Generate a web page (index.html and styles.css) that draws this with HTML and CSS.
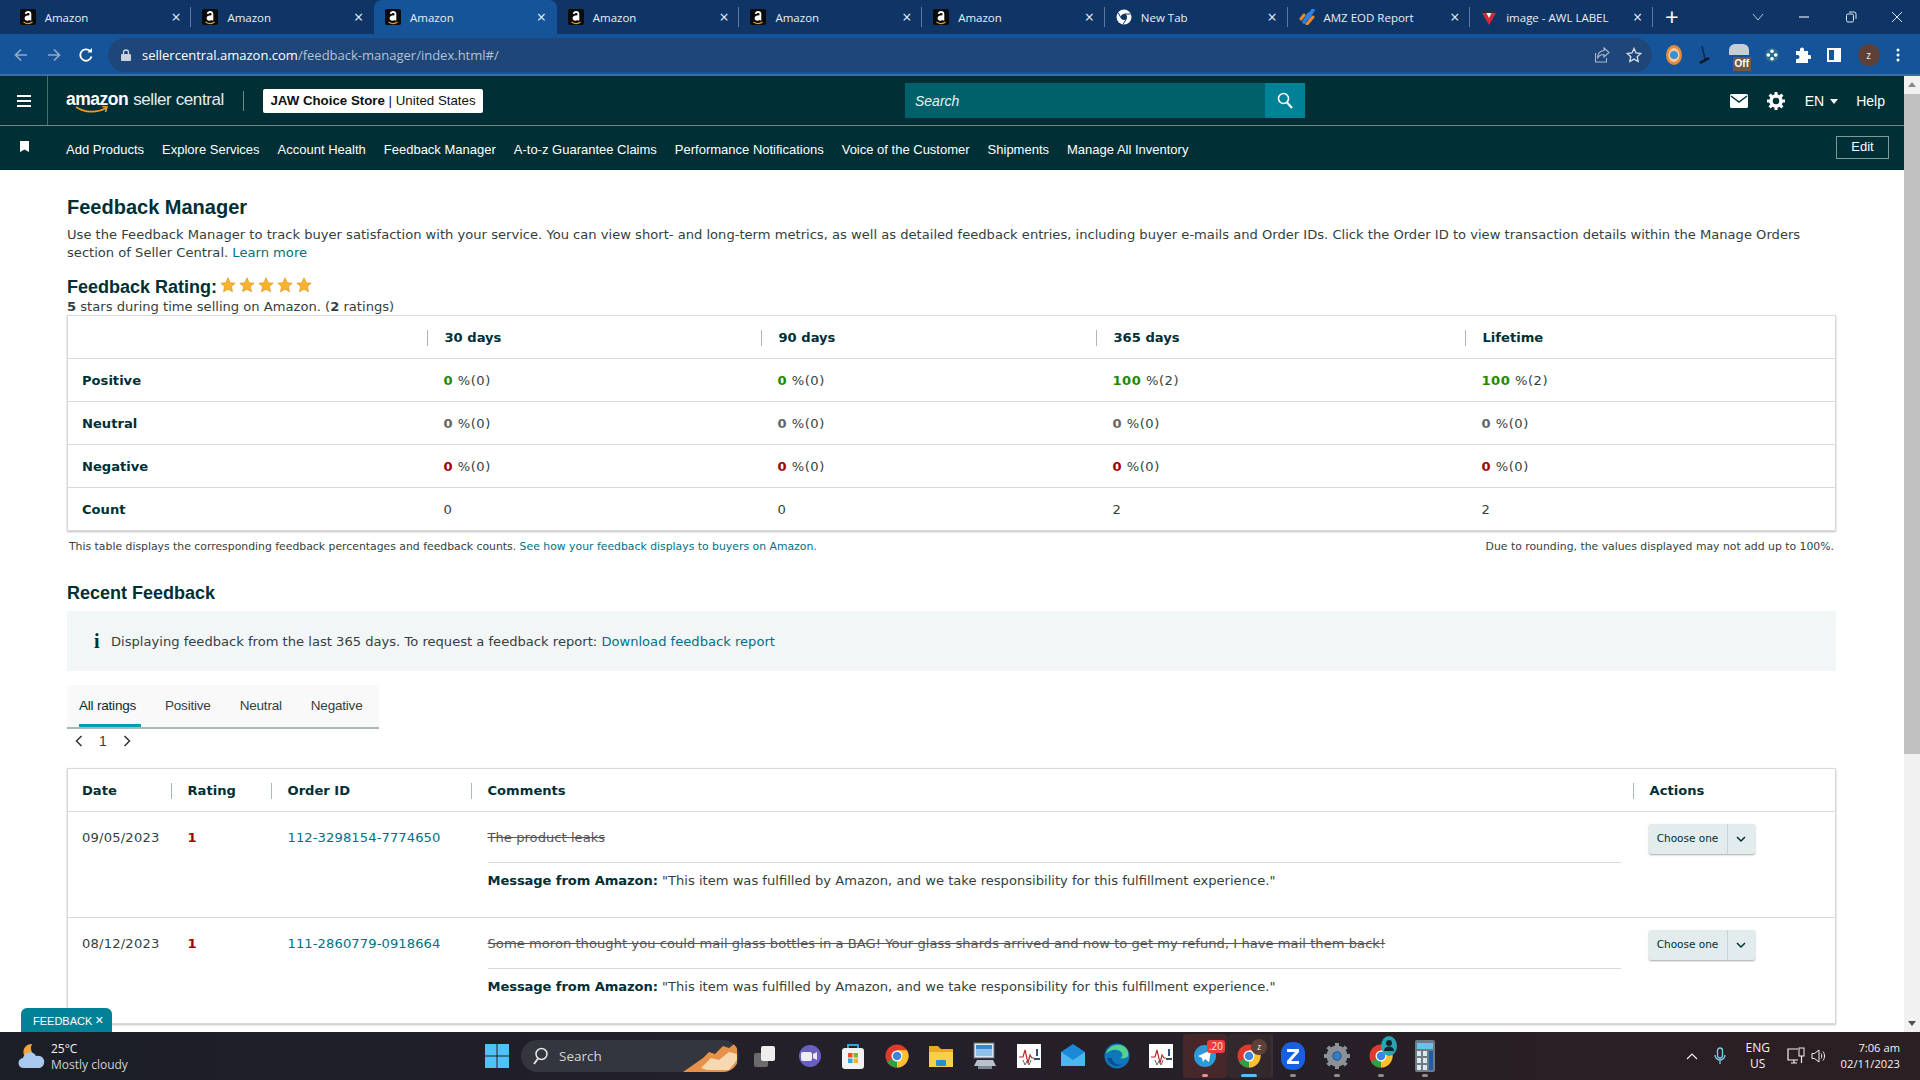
FILE: index.html
```html
<!DOCTYPE html>
<html lang="en">

<head>
	<meta charset="UTF-8" />
	<meta name="viewport" content="width=device-width, initial-scale=1.0" />
	<title>Feedback Manager</title>
	<link rel="stylesheet" href="styles.css">
</head>

<body>
	<svg class="defs" width="0" height="0">
		<symbol id="chrome" viewBox="0 0 48 48">
			<circle cx="24" cy="24" r="23" fill="#dd3b2e" />
			<path d="M24 24 4 35.5A23 23 0 0 0 24 47l11-12z" fill="#2f9e44" />
			<path d="M24 24 24 47A23 23 0 0 0 44 12.500L24 12z" fill="#fbc02d" />
			<circle cx="24" cy="24" r="11" fill="#fff" />
			<circle cx="24" cy="24" r="8.500" fill="#3d85e0" />
		</symbol>
		<symbol id="wave" viewBox="0 0 24 24">
			<rect width="24" height="24" fill="#fff" />
			<path d="M2 13h4l2-7 3 13 2-8 2 3h2" fill="none" stroke="#c0272d" stroke-width="1.200" />
			<path d="M19 5h2v7h-2zM17 14h6v2h-6z" fill="#31507a" />
			<path d="M6 16l2 5 2-4 2 4 2-5" fill="none" stroke="#666" stroke-width="1" />
		</symbol>
		<symbol id="amz" viewBox="0 0 16 16">
			<rect width="16" height="16" rx="2" fill="#0b0b0b" />
			<path d="M3.500 13c3 2 6.500 2 9 0" fill="none" stroke="#f39a21" stroke-width="1.300" />
			<path d="M4.800 4.800C5.100 3 6.300 2 8 2c2.200 0 3.300 1.100 3.300 2.900V11.500H9.600v-.8C9 11.400 8.200 11.700 7.300 11.700 5.700 11.700 4.600 10.700 4.600 9.200c0-2 1.700-2.800 4.900-3v-.9c0-.8-.5-1.300-1.500-1.300-.7 0-1.200.3-1.400 1z" fill="#fff" />
		</symbol>
	</svg>

	<div class="tabstrip">
		<div class="tab"><svg class="fav"><use href="#amz" /></svg><span class="tab-title">Amazon</span><span class="tab-x">×</span></div>
		<div class="tab"><svg class="fav"><use href="#amz" /></svg><span class="tab-title">Amazon</span><span class="tab-x">×</span></div>
		<div class="tab tab-active"><svg class="fav"><use href="#amz" /></svg><span class="tab-title">Amazon</span><span class="tab-x">×</span></div>
		<div class="tab"><svg class="fav"><use href="#amz" /></svg><span class="tab-title">Amazon</span><span class="tab-x">×</span></div>
		<div class="tab"><svg class="fav"><use href="#amz" /></svg><span class="tab-title">Amazon</span><span class="tab-x">×</span></div>
		<div class="tab"><svg class="fav"><use href="#amz" /></svg><span class="tab-title">Amazon</span><span class="tab-x">×</span></div>
		<div class="tab">
			<svg class="fav" viewBox="0 0 16 16"><circle cx="8" cy="8" r="7.500" fill="#fff" /><circle cx="8" cy="8" r="3" fill="#0f3566" /><path d="M8 5h6.500M5.400 9.500 2.200 3.800M10.600 9.500 7 15.400" stroke="#0f3566" stroke-width="1" /></svg>
			<span class="tab-title">New Tab</span><span class="tab-x">×</span>
		</div>
		<div class="tab">
			<svg class="fav" viewBox="0 0 16 16"><path d="M9 9 14 1M5 13l5-8" stroke="#2f7fe8" stroke-width="3.500" stroke-linecap="round" /><path d="M2 10 5 6M8 15l6-7" stroke="#f08a24" stroke-width="3" stroke-linecap="round" /></svg>
			<span class="tab-title">AMZ EOD Report</span><span class="tab-x">×</span>
		</div>
		<div class="tab">
			<svg class="fav" viewBox="0 0 16 16"><path d="M1 1h14v3H1z" fill="#25304a" /><path d="M1 4h14L8 16z" fill="#d9263a" /><path d="M5.500 4h5L8 9z" fill="#fff" /></svg>
			<span class="tab-title">image - AWL LABEL</span><span class="tab-x">×</span>
		</div>
		<span class="new-tab">+</span>
		<div class="win-btns">
			<svg width="12" height="8" viewBox="0 0 12 8"><path d="M1 1l5 6 5-6" fill="none" stroke="#b7c6da" stroke-width="1" /></svg>
			<svg width="12" height="8" viewBox="0 0 12 8"><path d="M1 4h10" stroke="#dfe6ef" stroke-width="1.200" /></svg>
			<svg width="12" height="12" viewBox="0 0 12 12"><rect x="1.500" y="3" width="7" height="8" rx="1.500" fill="none" stroke="#dfe6ef" /><path d="M4 1h5a2 2 0 0 1 2 2v5" fill="none" stroke="#dfe6ef" /></svg>
			<svg width="12" height="12" viewBox="0 0 12 12"><path d="M1 1l10 10M11 1 1 11" stroke="#dfe6ef" stroke-width="1" /></svg>
		</div>
	</div>

	<div class="toolbar">
		<div class="nav-btns">
			<svg width="16" height="16" viewBox="0 0 16 16"><path d="M14 8H2.500M8 2.500 2.500 8 8 13.500" fill="none" stroke="#8fa9cb" stroke-width="1.700" /></svg>
			<svg width="16" height="16" viewBox="0 0 16 16"><path d="M2 8h11.500M8 2.500 13.500 8 8 13.500" fill="none" stroke="#8fa9cb" stroke-width="1.700" /></svg>
			<svg width="16" height="16" viewBox="0 0 16 16"><path d="M13.500 9.500A5.700 5.700 0 1 1 12 4" fill="none" stroke="#fff" stroke-width="1.800" /><path d="M9.500 5.500H14V1z" fill="#fff" /></svg>
		</div>
		<div class="omnibox">
			<svg class="lock" width="10" height="12" viewBox="0 0 10 12"><path d="M2.500 5V3.500a2.500 2.500 0 0 1 5 0V5" fill="none" stroke="#c9d3e0" stroke-width="1.300" /><rect y="5" width="10" height="7" rx="1" fill="#c9d3e0" /></svg>
			<span class="url"><span class="url-host">sellercentral.amazon.com</span>/feedback-manager/index.html#/</span>
			<svg class="omni-share" width="16" height="16" viewBox="0 0 16 16"><path d="M10 1l5 4.500L10 10V7.500C6.500 7.500 4.500 9 3.500 11.500 3.500 7 6 4 10 3.500z M1.500 6v9h11v-4" fill="none" stroke="#a9b9cf" stroke-width="1.100" /></svg>
			<svg width="16" height="16" viewBox="0 0 16 16"><path d="M8 1.500l2 4.500 4.800.5-3.600 3.200 1 4.800L8 12.100 3.800 14.500l1-4.800L1.200 6.500 6 6z" fill="none" stroke="#d5dde8" stroke-width="1.300" /></svg>
		</div>
		<div class="ext-icons">
			<svg width="16" height="20" viewBox="0 0 16 20"><ellipse cx="8" cy="10" rx="8" ry="10" fill="#e58a3c" /><ellipse cx="8" cy="10" rx="5.500" ry="7" fill="#f3c9a0" /><circle cx="8" cy="10" r="4" fill="#3a8fd0" /></svg>
			<svg width="14" height="20" viewBox="0 0 14 20"><path d="M4 1l3 13" stroke="#142a45" stroke-width="1.500" /><path d="M2 18l9-5" stroke="#0c1523" stroke-width="2.500" /></svg>
			<span class="ext-off"><span class="off-badge">Off</span></span>
			<svg width="14" height="16" viewBox="0 0 14 16"><circle cx="7" cy="8" r="7" fill="#2d6b8f" /><path d="M7 2.500a1.800 1.800 0 0 1 0 3.600 1.800 1.800 0 0 1 0-3.600zM7 9.900a1.800 1.800 0 0 1 0 3.600 1.800 1.800 0 0 1 0-3.600zM3.300 6.200a1.800 1.800 0 0 1 0 3.600 1.800 1.800 0 0 1 0-3.600zM10.700 6.200a1.800 1.800 0 0 1 0 3.600 1.800 1.800 0 0 1 0-3.600z" fill="#fff" /></svg>
			<svg width="16" height="16" viewBox="0 0 16 16"><path d="M1 4h4V2.500a2 2 0 0 1 4 0V4h4v4h1.500a2 2 0 0 1 0 4H13v4H1v-4h1.500a2 2 0 0 0 0-4H1z" fill="#fff" /></svg>
			<svg width="14" height="14" viewBox="0 0 14 14"><rect x="1" y="1" width="12" height="12" fill="none" stroke="#fff" stroke-width="2" /><rect x="7" y="1" width="6" height="12" fill="#fff" /></svg>
			<span class="avatar">z</span>
			<svg width="4" height="14" viewBox="0 0 4 14"><circle cx="2" cy="2" r="1.500" fill="#fff" /><circle cx="2" cy="7" r="1.500" fill="#fff" /><circle cx="2" cy="12" r="1.500" fill="#fff" /></svg>
		</div>
	</div>

	<div class="viewport">
		<div class="page">
			<header class="sc-header">
				<div class="burger"><span></span><span></span><span></span></div>
				<div class="logo">
					<span class="logo-amazon">amazon</span><span class="logo-seller">seller central</span>
					<svg class="logo-smile" width="34" height="8" viewBox="0 0 34 8"><path d="M1 1c9 6 21 6 30 1M27 .500l5 .500-1.500 5" fill="none" stroke="#f39a21" stroke-width="1.600" /></svg>
				</div>
				<span class="head-sep"></span>
				<div class="store"><b>JAW Choice Store</b> | United States</div>
				<div class="search">
					<span class="search-input">Search</span>
					<span class="search-btn"><svg width="16" height="17" viewBox="0 0 16 17"><circle cx="6.500" cy="6.500" r="5" fill="none" stroke="#fff" stroke-width="1.600" /><path d="M10 10.500l5 5.500" stroke="#fff" stroke-width="2" /></svg></span>
				</div>
				<div class="head-right">
					<svg width="18" height="14" viewBox="0 0 18 14"><rect width="18" height="14" rx="1.500" fill="#fff" /><path d="M1 2l8 6 8-6" fill="none" stroke="#002f36" stroke-width="1.500" /></svg>
					<svg class="gear" width="18" height="18" viewBox="0 0 18 18"><circle cx="9" cy="9" r="5" fill="none" stroke="#fff" stroke-width="3.500" /><path d="M9 0v4M9 14v4M0 9h4M14 9h4M2.600 2.600l2.800 2.800M12.600 12.600l2.800 2.800M15.400 2.600l-2.800 2.800M5.400 12.600l-2.800 2.800" stroke="#fff" stroke-width="3" /></svg>
					<span class="lang">EN<i class="caret"></i></span>
					<span class="help">Help</span>
				</div>
			</header>

			<nav class="sc-nav">
				<svg class="bookmark" width="9" height="11" viewBox="0 0 9 11"><path d="M0 0h9v11L4.500 8.500 0 11z" fill="#fff" /></svg>
				<a>Add Products</a>
				<a>Explore Services</a>
				<a>Account Health</a>
				<a>Feedback Manager</a>
				<a>A-to-z Guarantee Claims</a>
				<a>Performance Notifications</a>
				<a>Voice of the Customer</a>
				<a>Shipments</a>
				<a>Manage All Inventory</a>
				<span class="edit-btn">Edit</span>
			</nav>

			<main class="content">
				<h1>Feedback Manager</h1>
				<p class="intro">Use the Feedback Manager to track buyer satisfaction with your service. You can view short- and long-term metrics, as well as detailed feedback entries, including buyer e-mails and Order IDs. Click the Order ID to view transaction details within the Manage Orders section of Seller Central. <a class="link">Learn more</a></p>

				<div class="rating-head">
					<h2>Feedback Rating:</h2>
					<div class="stars">
						<svg viewBox="0 0 16 16"><path d="M8 .800l2.200 4.900 5 .5-3.800 3.400 1.100 5.200L8 12.200 3.500 14.800l1.100-5.200L.800 6.200l5-.5z" /></svg>
						<svg viewBox="0 0 16 16"><path d="M8 .800l2.200 4.900 5 .5-3.800 3.400 1.100 5.200L8 12.200 3.500 14.800l1.100-5.200L.800 6.200l5-.5z" /></svg>
						<svg viewBox="0 0 16 16"><path d="M8 .800l2.200 4.900 5 .5-3.800 3.400 1.100 5.200L8 12.200 3.500 14.800l1.100-5.200L.800 6.200l5-.5z" /></svg>
						<svg viewBox="0 0 16 16"><path d="M8 .800l2.200 4.900 5 .5-3.800 3.400 1.100 5.200L8 12.200 3.500 14.800l1.100-5.200L.800 6.200l5-.5z" /></svg>
						<svg viewBox="0 0 16 16"><path d="M8 .800l2.200 4.900 5 .5-3.800 3.400 1.100 5.200L8 12.200 3.500 14.800l1.100-5.200L.800 6.200l5-.5z" /></svg>
					</div>
				</div>
				<p class="rating-sub"><b>5</b> stars during time selling on Amazon. (<b>2</b> ratings)</p>

				<table class="grid metrics">
					<colgroup>
						<col class="c-label"><col class="c-30"><col class="c-90"><col class="c-365"><col>
					</colgroup>
					<tr>
						<th></th>
						<th><span class="th-in">30 days</span></th>
						<th><span class="th-in">90 days</span></th>
						<th><span class="th-in">365 days</span></th>
						<th><span class="th-in">Lifetime</span></th>
					</tr>
					<tr>
						<td class="row-name">Positive</td>
						<td><b class="good">0</b> %(0)</td>
						<td><b class="good">0</b> %(0)</td>
						<td><b class="good">100</b> %(2)</td>
						<td><b class="good">100</b> %(2)</td>
					</tr>
					<tr>
						<td class="row-name">Neutral</td>
						<td><b class="flat">0</b> %(0)</td>
						<td><b class="flat">0</b> %(0)</td>
						<td><b class="flat">0</b> %(0)</td>
						<td><b class="flat">0</b> %(0)</td>
					</tr>
					<tr>
						<td class="row-name">Negative</td>
						<td><b class="bad">0</b> %(0)</td>
						<td><b class="bad">0</b> %(0)</td>
						<td><b class="bad">0</b> %(0)</td>
						<td><b class="bad">0</b> %(0)</td>
					</tr>
					<tr>
						<td class="row-name">Count</td>
						<td>0</td>
						<td>0</td>
						<td>2</td>
						<td>2</td>
					</tr>
				</table>
				<div class="table-note">
					<span>This table displays the corresponding feedback percentages and feedback counts. <a class="link">See how your feedback displays to buyers on Amazon.</a></span>
					<span>Due to rounding, the values displayed may not add up to 100%.</span>
				</div>

				<h2 class="recent-title">Recent Feedback</h2>
				<div class="info-box">
					<span class="info-i">i</span>
					<span>Displaying feedback from the last 365 days. To request a feedback report: <a class="link">Download feedback report</a></span>
				</div>

				<div class="rating-tabs">
					<span class="rt rt-active">All ratings</span>
					<span class="rt">Positive</span>
					<span class="rt">Neutral</span>
					<span class="rt">Negative</span>
				</div>
				<div class="pager">
					<svg width="8" height="12" viewBox="0 0 8 12"><path d="M6.500 1 1.500 6l5 5" fill="none" stroke="#333" stroke-width="1.500" /></svg>
					<span>1</span>
					<svg width="8" height="12" viewBox="0 0 8 12"><path d="M1.500 1l5 5-5 5" fill="none" stroke="#333" stroke-width="1.500" /></svg>
				</div>

				<table class="grid feedback">
					<colgroup>
						<col class="c-date"><col class="c-rating"><col class="c-order"><col class="c-comments"><col>
					</colgroup>
					<tr>
						<th><span class="th-first">Date</span></th>
						<th><span class="th-in">Rating</span></th>
						<th><span class="th-in">Order ID</span></th>
						<th><span class="th-in">Comments</span></th>
						<th><span class="th-in">Actions</span></th>
					</tr>
					<tr>
						<td class="first-cell">09/05/2023</td>
						<td><b class="bad">1</b></td>
						<td><a class="link order-id">112-3298154-7774650</a></td>
						<td>
							<div class="comment">The product leaks</div>
							<div class="amz-msg"><b>Message from Amazon:</b> "This item was fulfilled by Amazon, and we take responsibility for this fulfillment experience."</div>
						</td>
						<td>
							<div class="choose"><span class="choose-text">Choose one</span><span class="choose-arrow"><svg width="10" height="7" viewBox="0 0 10 7"><path d="M1 1l4 4 4-4" fill="none" stroke="#002f36" stroke-width="1.500" /></svg></span></div>
						</td>
					</tr>
					<tr>
						<td class="first-cell">08/12/2023</td>
						<td><b class="bad">1</b></td>
						<td><a class="link order-id">111-2860779-0918664</a></td>
						<td>
							<div class="comment">Some moron thought you could mail glass bottles in a BAG! Your glass shards arrived and now to get my refund, I have mail them back!</div>
							<div class="amz-msg"><b>Message from Amazon:</b> "This item was fulfilled by Amazon, and we take responsibility for this fulfillment experience."</div>
						</td>
						<td>
							<div class="choose"><span class="choose-text">Choose one</span><span class="choose-arrow"><svg width="10" height="7" viewBox="0 0 10 7"><path d="M1 1l4 4 4-4" fill="none" stroke="#002f36" stroke-width="1.500" /></svg></span></div>
						</td>
					</tr>
				</table>
			</main>

			<div class="feedback-tag">FEEDBACK <span class="tag-x">×</span></div>
		</div>

		<div class="scrollbar">
			<i class="sb-up"></i>
			<div class="sb-thumb"></div>
			<i class="sb-down"></i>
		</div>
	</div>

	<footer class="taskbar">
		<div class="weather">
			<svg width="28" height="26" viewBox="0 0 28 26"><path d="M14 1a8 8 0 0 0-8 11h10A9 9 0 0 1 14 1z" fill="#f2a33a" /><path d="M6 25a5 5 0 0 1-1-10 7 7 0 0 1 13-2 6 6 0 0 1 4 12z" fill="#a9c8ee" /></svg>
			<div class="weather-text"><span>25°C</span><span class="weather-sub">Mostly cloudy</span></div>
		</div>
		<div class="task-center">
			<svg class="win" width="24" height="24" viewBox="0 0 24 24"><path d="M0 0h11.500v11.500H0zM12.500 0H24v11.500H12.500zM0 12.500h11.500V24H0zM12.500 12.500H24V24H12.500z" fill="#4fc3f7" /></svg>
			<div class="task-search">
				<svg width="16" height="18" viewBox="0 0 16 18"><circle cx="9.500" cy="7" r="5.500" fill="none" stroke="#e6e6e6" stroke-width="1.500" /><path d="M6 11.500 2 17" stroke="#e6e6e6" stroke-width="1.800" /></svg>
				<span>Search</span>
				<svg class="search-art" width="56" height="30" viewBox="0 0 56 30"><path d="M0 30 20 16l6-6 6 2 8-8 6 2 8-6v22l-6 8z" fill="#e8914a" /><path d="M18 26l10-10 8 2 10-8 8 2v6l-8 10H24z" fill="#f6d9b0" /></svg>
			</div>
			<div class="task-icons">
				<span class="ti"><svg width="24" height="24" viewBox="0 0 24 24"><rect x="1" y="9" width="14" height="14" rx="2" fill="#6b6b6b" /><rect x="8" y="2" width="14" height="15" rx="2" fill="#eee" /></svg></span>
				<span class="ti"><svg width="24" height="24" viewBox="0 0 24 24"><circle cx="13" cy="12" r="11" fill="#6a5fc1" /><rect x="4" y="8" width="11" height="9" rx="2" fill="#eee" /><path d="M16 10l4-2v8l-4-2z" fill="#eee" /></svg></span>
				<span class="ti"><svg width="24" height="28" viewBox="0 0 24 28"><path d="M7 6V3h10v3" fill="none" stroke="#2aa7e0" stroke-width="2" /><rect x="1" y="6" width="22" height="21" rx="3" fill="#f2f2f2" /><path d="M7 11h4.500v4.500H7z" fill="#e8502a" /><path d="M12.500 11H17v4.500h-4.500z" fill="#7cb82f" /><path d="M7 16.500h4.500V21H7z" fill="#2aa7e0" /><path d="M12.500 16.500H17V21h-4.500z" fill="#f6b51e" /></svg></span>
				<span class="ti"><svg width="24" height="30"><use href="#chrome" /></svg></span>
				<span class="ti"><svg width="26" height="26" viewBox="0 0 26 26"><path d="M1 3h9l3 3h12v18H1z" fill="#e9a825" /><path d="M1 9h24v15H1z" fill="#f7cf4d" /><rect x="8" y="17" width="10" height="6" rx="1" fill="#2a8bd4" /></svg></span>
				<span class="ti"><svg width="26" height="28" viewBox="0 0 26 28"><rect x="2" y="1" width="20" height="15" fill="#dfe6ef" stroke="#5a6b85" /><path d="M4 3h16v4H4z" fill="#3c86d1" /><path d="M4 7h16v7H4z" fill="#8fc1ea" /><path d="M5 18h16l3 6H2z" fill="#b9c1cc" /><rect x="6" y="24" width="14" height="3" fill="#7d8794" /></svg></span>
				<span class="ti"><svg width="24" height="24"><use href="#wave" /></svg></span>
				<span class="ti"><svg width="24" height="24" viewBox="0 0 24 24"><path d="M0 8 12 0l12 8v14H0z" fill="#1e88d8" /><path d="M0 8l12 8 12-8v14H0z" fill="#49b8f0" /></svg></span>
				<span class="ti"><svg width="26" height="26" viewBox="0 0 26 26"><circle cx="13" cy="13" r="12.500" fill="#0f76bd" /><path d="M2 11C4 3 13 0 19 3c4 2 6 6 5 10-1 2-5 3-8 2 3-1 3-4 1-6-4-4-12-2-15 2z" fill="#52d28a" /><path d="M8 15c0 5 6 8 11 6-5 4-14 2-16-6z" fill="#0b4e8a" /></svg></span>
				<span class="ti"><svg width="24" height="24"><use href="#wave" /></svg></span>
				<span class="ti ti-run">
					<svg width="24" height="24" viewBox="0 0 24 24"><circle cx="12" cy="12" r="11" fill="#2a9bd8" /><path d="M5 12l13-6-2 12-4-3-2 3-1-4z" fill="#fff" /></svg>
					<b class="ti-badge">.20</b><i class="dot dot-pink"></i>
				</span>
				<span class="ti ti-open">
					<svg width="24" height="30"><use href="#chrome" /></svg>
					<b class="ti-z">z</b><i class="dot dot-blue"></i>
				</span>
				<span class="ti">
					<svg width="24" height="30" viewBox="0 0 24 30"><rect y="1" width="24" height="28" rx="11" fill="#1a5fe0" /><path d="M6 8h12v3l-8 9h8v3H6v-3l8-9H6z" fill="#fff" /></svg>
					<i class="dot"></i>
				</span>
				<span class="ti">
					<svg width="26" height="26" viewBox="0 0 26 26"><circle cx="13" cy="13" r="7.500" fill="none" stroke="#8a9199" stroke-width="6" /><path d="M13 0v5M13 21v5M0 13h5M21 13h5M3.800 3.800l3.500 3.500M18.700 18.700l3.500 3.500M22.200 3.800l-3.500 3.500M7.300 18.700l-3.500 3.500" stroke="#8a9199" stroke-width="4" /><circle cx="13" cy="13" r="4" fill="#2d7fd0" /></svg>
					<i class="dot"></i>
				</span>
				<span class="ti">
					<svg width="24" height="30"><use href="#chrome" /></svg>
					<svg class="ti-person" width="16" height="20" viewBox="0 0 16 20"><ellipse cx="8" cy="10" rx="8" ry="10" fill="#2aa3b0" /><circle cx="8" cy="7" r="3" fill="#12222a" /><path d="M3 15c0-6 10-6 10 0z" fill="#12222a" /></svg>
					<i class="dot"></i>
				</span>
				<span class="ti">
					<svg width="20" height="32" viewBox="0 0 20 32"><rect width="20" height="32" rx="2" fill="#6e7b87" /><rect x="2" y="3" width="16" height="6" fill="#62c4e8" /><path d="M2 11h4v5H2zM8 11h4v5H8zM2 18h4v5H2zM8 18h4v5H8zM2 25h4v5H2zM8 25h4v5H8z" fill="#dfe6ec" /><rect x="14" y="11" width="4" height="19" fill="#1c5fa8" /></svg>
					<i class="dot"></i>
				</span>
			</div>
		</div>
		<div class="tray">
			<svg width="12" height="8" viewBox="0 0 12 8"><path d="M1 7l5-5 5 5" fill="none" stroke="#eee" stroke-width="1.200" /></svg>
			<svg class="tray-mic" width="12" height="18" viewBox="0 0 12 18"><rect x="3.500" y="1" width="5" height="10" rx="2.500" fill="none" stroke="#7fd0e8" stroke-width="1.300" /><path d="M1 8a5 5 0 0 0 10 0M6 13v4" fill="none" stroke="#7fd0e8" stroke-width="1.300" /></svg>
			<span class="tray-lang">ENG<br>US</span>
			<svg class="tray-net" width="18" height="18" viewBox="0 0 18 18"><path d="M11 2H1v11h10M4 16h6M7 13v3" fill="none" stroke="#f2f2f2" stroke-width="1.200" /><rect x="12" y="1" width="5" height="8" fill="none" stroke="#f2f2f2" /><path d="M14.500 9v7" stroke="#f2f2f2" stroke-width="1.200" /></svg>
			<svg class="tray-vol" width="16" height="16" viewBox="0 0 16 16"><path d="M1 5.500h2.500L8 2v12L3.500 10.500H1z" fill="none" stroke="#f2f2f2" /><path d="M10 5.500c1 1.500 1 3.500 0 5M12 3.500c2 3 2 6 0 9" fill="none" stroke="#f2f2f2" /></svg>
			<span class="tray-time">7:06 am<br>02/11/2023</span>
		</div>
	</footer>
</body>

</html>
```

FILE: styles.css
```css
* {
	box-sizing: border-box;
}

body {
	margin: 0;
	width: 1920px;
	height: 1080px;
	overflow: hidden;
	display: flex;
	flex-direction: column;
	font-family: "DejaVu Sans", sans-serif;
	font-size: 13.1px;
	color: #333f40;
	background-color: #fff;
}

.defs {
	position: absolute;
}

/* browser chrome */
.tabstrip {
	height: 34px;
	display: flex;
	align-items: center;
	padding-left: 8.7px;
	background-color: #0f3566;
	color: #e8eef6;
	font-family: "Open Sans", sans-serif;
	font-size: 11.5px;
}

.tab {
	width: 182.7px;
	height: 34px;
	display: flex;
	align-items: center;
	padding-left: 11px;
	position: relative;
}

.tab::after {
	content: "";
	position: absolute;
	right: 0;
	top: 7px;
	height: 20px;
	border-right: 1px solid #5c7ba3;
}

.tab:nth-child(2)::after,
.tab:nth-child(3)::after {
	display: none;
}

.tab-active {
	background-color: #155499;
	border-radius: 8px 8px 0 0;
}

.fav {
	width: 16px;
	height: 16px;
	flex: none;
}

.tab-title {
	margin-left: 9px;
	flex: 1;
	white-space: nowrap;
}

.tab-x {
	width: 20px;
	font-size: 16px;
	color: #e8eef6;
}

.new-tab {
	margin-left: 12px;
	font-size: 24px;
	line-height: 1;
	color: #fff;
}

.win-btns {
	margin-left: auto;
	width: 168px;
	padding-right: 17px;
	display: flex;
	justify-content: space-between;
	align-items: center;
}

.toolbar {
	height: 42px;
	padding-top: 2px;
	display: flex;
	align-items: center;
	background-color: #155499;
	border-bottom: 2px solid #3a6cab;
}

.nav-btns {
	width: 108px;
	padding: 0 14px 0 13px;
	display: flex;
	justify-content: space-between;
}

.omnibox {
	width: 1544px;
	height: 34px;
	border-radius: 17px;
	background-color: #1f4679;
	display: flex;
	align-items: center;
	padding: 0 10px 0 13px;
}

.lock {
	margin-right: 11px;
}

.url {
	flex: 1;
	color: #b3c1d4;
	font-family: "Open Sans", sans-serif;
	font-size: 13px;
}

.url-host {
	color: #fff;
}

.omni-share {
	margin-right: 16px;
}

.ext-icons {
	flex: 1;
	display: flex;
	align-items: center;
	justify-content: space-between;
	padding: 0 20px 0 14px;
}

.ext-off {
	width: 20px;
	height: 22px;
	position: relative;
	background: linear-gradient(#c9ced4 0 50%, transparent 50%);
	border-radius: 6px 6px 0 0;
}

.off-badge {
	position: absolute;
	left: 4px;
	bottom: -5px;
	padding: 0 2px;
	background-color: #6d5a45;
	color: #fff;
	font: bold 10px "Liberation Sans", sans-serif;
	line-height: 14px;
}

.avatar {
	width: 22px;
	height: 22px;
	border-radius: 50%;
	background-color: #5d4037;
	color: #eee;
	font: 10px/22px "Open Sans", sans-serif;
	text-align: center;
}

/* page */
.viewport {
	flex: 1;
	min-height: 0;
	display: flex;
}

.page {
	flex: 1;
	min-width: 0;
	overflow: hidden;
	position: relative;
}

.scrollbar {
	width: 16px;
	display: flex;
	flex-direction: column;
	align-items: center;
	background-color: #f1f1f1;
	padding: 6px 0;
}

.sb-thumb {
	width: 16px;
	height: 660px;
	margin-top: 7px;
	background-color: #c1c1c1;
}

.sb-up,
.sb-down {
	width: 0;
	height: 0;
	border-left: 4px solid transparent;
	border-right: 4px solid transparent;
}

.sb-up {
	border-bottom: 5px solid #8a8a8a;
}

.sb-down {
	margin-top: auto;
	border-top: 5px solid #505050;
}

.sc-header {
	height: 50px;
	display: flex;
	align-items: center;
	background-color: #002f36;
	border-bottom: 1px solid #6f8a85;
	color: #fff;
	font-family: "Liberation Sans", sans-serif;
}

.burger {
	width: 48px;
	height: 49px;
	border-right: 1px solid #4d6e6f;
	display: flex;
	flex-direction: column;
	justify-content: center;
	gap: 3px;
	padding-left: 17px;
}

.burger span {
	width: 14px;
	height: 2px;
	background-color: #fff;
}

.logo {
	width: 195px;
	padding-left: 18px;
	position: relative;
	white-space: nowrap;
	margin-top: -3px;
}

.logo-amazon {
	font-size: 17.5px;
	font-weight: bold;
	letter-spacing: -0.5px;
}

.logo-seller {
	font-size: 17px;
	margin-left: 5px;
	letter-spacing: -0.4px;
	color: #e5ecec;
}

.logo-smile {
	position: absolute;
	left: 27px;
	top: 17px;
}

.head-sep {
	height: 20px;
	border-left: 1px solid #6f8a85;
}

.store {
	margin-left: 19px;
	width: 220px;
	height: 24px;
	border-radius: 2px;
	background-color: #fff;
	color: #0f1111;
	font-size: 13.3px;
	line-height: 24px;
	text-align: center;
	white-space: nowrap;
}

.search {
	margin-left: 422px;
	width: 400px;
	height: 35px;
	display: flex;
	background-color: #00616b;
}

.search-input {
	flex: 1;
	padding-left: 10px;
	font-style: italic;
	font-size: 14px;
	line-height: 36px;
	color: #e8f2f2;
}

.search-btn {
	width: 40px;
	display: flex;
	align-items: center;
	justify-content: center;
	background-color: #008296;
}

.head-right {
	margin-left: auto;
	padding-right: 19px;
	display: flex;
	align-items: center;
	font-size: 14px;
}

.gear {
	margin-left: 19px;
}

.lang {
	margin-left: 20px;
}

.caret {
	display: inline-block;
	margin-left: 6px;
	vertical-align: 2px;
	border-left: 4px solid transparent;
	border-right: 4px solid transparent;
	border-top: 5px solid #fff;
}

.help {
	margin-left: 18px;
}

.sc-nav {
	height: 44px;
	padding-top: 2px;
	display: flex;
	align-items: center;
	gap: 18px;
	padding-left: 20px;
	background-color: #002f36;
	color: #fff;
	font-family: "Liberation Sans", sans-serif;
	font-size: 13px;
}

.bookmark {
	margin-right: 19px;
	margin-top: -5px;
}

.edit-btn {
	margin-left: auto;
	margin-right: 15px;
	width: 53px;
	height: 23px;
	margin-top: -3px;
	border: 1px solid #7f9a9a;
	text-align: center;
	line-height: 20px;
}

.content {
	padding: 25px 68px 0 67px;
}

h1 {
	margin: 0;
	font-family: "Liberation Sans", sans-serif;
	font-size: 20px;
	line-height: 24px;
	color: #002f36;
}

.intro {
	margin: 7px 0 0;
	line-height: 18px;
}

.link {
	color: #007185;
}

.rating-head {
	margin-top: 13px;
	height: 24px;
	display: flex;
	align-items: center;
}

h2 {
	margin: 0;
	font-family: "Liberation Sans", sans-serif;
	font-size: 18px;
	color: #002f36;
}

.stars {
	margin-left: 3px;
	margin-top: -4px;
	display: flex;
	gap: 3px;
}

.stars svg {
	width: 16px;
	height: 16px;
	fill: #f7b32b;
	stroke: #d98c12;
	stroke-width: 0.6;
}

.rating-sub {
	margin: 0;
	height: 16px;
	line-height: 16px;
}

.grid {
	width: 1769px;
	table-layout: fixed;
	border-collapse: collapse;
	border: 1px solid #d5dbdb;
	box-shadow: 0 1px 2px rgba(0, 0, 0, 0.25);
}

.grid th {
	text-align: left;
	padding: 2px 0 0;
	color: #002f36;
	font-weight: bold;
}

.grid tr {
	border-bottom: 1px solid #d5dbdb;
}

.th-in {
	display: block;
	height: 16px;
	line-height: 16px;
	padding-left: 16px;
	border-left: 1px solid #aab7b8;
}

.metrics .th-in {
	padding-left: 17px;
}

.metrics tr {
	height: 43px;
}

.metrics td {
	padding: 0 0 0 17px;
	letter-spacing: 0.5px;
}

.metrics .row-name {
	padding-left: 14px;
	font-weight: bold;
	letter-spacing: 0;
	color: #002f36;
}

.c-label {
	width: 359px;
}

.c-30 {
	width: 334px;
}

.c-90 {
	width: 335px;
}

.c-365 {
	width: 369px;
}

.good {
	color: #1f8a00;
}

.flat {
	color: #666;
}

.bad {
	color: #a50000;
}

.table-note {
	display: flex;
	justify-content: space-between;
	padding: 0 2px;
	margin-top: 9px;
	font-size: 10.85px;
	line-height: 14px;
}

.recent-title {
	margin-top: 27px;
	line-height: 24px;
}

.info-box {
	margin-top: 6px;
	height: 60px;
	display: flex;
	align-items: center;
	padding-left: 27px;
	background-color: #f3f6f6;
}

.info-i {
	width: 17px;
	font-family: "Liberation Serif", serif;
	font-size: 20px;
	font-weight: bold;
	color: #002f36;
}

.rating-tabs {
	margin-top: 14px;
	width: 312px;
	height: 44px;
	display: flex;
	gap: 29px;
	padding: 0 12px;
	background-color: #f9f9f9;
	border-bottom: 2px solid #aab7b8;
	font-family: "Liberation Sans", sans-serif;
	font-size: 13.5px;
	line-height: 42px;
	letter-spacing: -0.2px;
}

.rt-active {
	height: 42px;
	color: #002f36;
	border-bottom: 3px solid #00a0b0;
	width: 62px;
	margin-right: -5px;
}

.pager {
	height: 24px;
	display: flex;
	align-items: center;
	gap: 16px;
	padding-left: 8px;
	font-family: "Liberation Sans", sans-serif;
	font-size: 14px;
}

.feedback {
	margin-top: 15px;
}

.feedback tr:first-child {
	height: 43px;
}

.feedback td {
	height: 106px;
	vertical-align: top;
	padding: 18px 0 0 17px;
}

.feedback .first-cell {
	padding-left: 14px;
	letter-spacing: 0.2px;
}

.order-id {
	letter-spacing: 0.1px;
}

.th-first {
	display: block;
	padding-left: 14px;
	line-height: 16px;
}

.c-date {
	width: 103px;
}

.c-rating {
	width: 100px;
}

.c-order {
	width: 200px;
}

.c-comments {
	width: 1162px;
}

.comment {
	width: 1133px;
	height: 33px;
	line-height: 16px;
	letter-spacing: 0.03px;
	text-decoration: line-through;
	color: #555;
	border-bottom: 1px solid #d5dbdb;
}

.amz-msg {
	margin-top: 10px;
	line-height: 16px;
}

.amz-msg b {
	color: #002f36;
	letter-spacing: -0.1px;
}

.choose {
	margin: -6px 0 0 -1px;
	width: 106px;
	height: 30px;
	display: flex;
	align-items: center;
	border-radius: 2px;
	background-color: #e3ecec;
	box-shadow: 0 1px 2px rgba(0, 0, 0, 0.35);
	font-size: 10.5px;
	color: #002f36;
}

.choose-text {
	width: 79px;
	height: 100%;
	line-height: 29px;
	text-align: center;
	border-right: 1px solid #c9d3d3;
}

.choose-arrow {
	flex: 1;
	text-align: center;
}

.feedback-tag {
	position: absolute;
	left: 21px;
	bottom: 0;
	width: 91px;
	height: 24px;
	border-radius: 6px 6px 0 0;
	background-color: #008296;
	color: #fff;
	padding-left: 12px;
	font-family: "Liberation Sans", sans-serif;
	font-size: 11px;
	line-height: 24px;
}

.tag-x {
	font-size: 14px;
}

/* windows taskbar */
.taskbar {
	height: 48px;
	flex: none;
	display: flex;
	align-items: center;
	background: linear-gradient(90deg, #1b1e27 0%, #23202a 40%, #2c1f23 100%);
	color: #f2f2f2;
	font-family: "Open Sans", sans-serif;
	font-size: 12px;
}

.weather {
	width: 485px;
	padding-left: 18px;
	display: flex;
	align-items: center;
	gap: 5px;
}

.weather-text {
	display: flex;
	flex-direction: column;
	line-height: 16px;
	margin-top: 2px;
}

.weather-sub {
	color: #cfcfcf;
}

.task-center {
	display: flex;
	align-items: center;
}

.win {
	margin-right: 12px;
}

.task-search {
	width: 218px;
	height: 32px;
	border-radius: 16px;
	background-color: #33363e;
	display: flex;
	align-items: center;
	gap: 11px;
	padding-left: 11px;
	position: relative;
	overflow: hidden;
	font-size: 13.5px;
	color: #d5d5d5;
}

.search-art {
	position: absolute;
	right: 0;
	bottom: 0;
}

.task-icons {
	display: flex;
	margin-left: 4px;
}

.ti {
	width: 44px;
	height: 44px;
	display: flex;
	align-items: center;
	justify-content: center;
	position: relative;
}

.ti-run {
	background-color: #46282a;
	border-radius: 4px;
}

.ti-open {
	background-color: #33292c;
	border-radius: 4px;
	box-shadow: 2px 0 0 #3a3033;
}

.ti-badge {
	position: absolute;
	right: 2px;
	top: 6px;
	padding: 0 2px;
	border-radius: 3px;
	background-color: #ee3b3b;
	font-size: 10px;
	font-weight: normal;
	line-height: 13px;
}

.ti-z {
	position: absolute;
	right: 4px;
	top: 5px;
	width: 16px;
	height: 16px;
	border-radius: 50%;
	background-color: #5d4037;
	font-size: 9px;
	font-weight: normal;
	line-height: 15px;
	text-align: center;
}

.ti-person {
	position: absolute;
	right: 6px;
	top: 2px;
}

.dot {
	position: absolute;
	left: 19px;
	bottom: 1px;
	width: 6px;
	height: 3px;
	border-radius: 2px;
	background-color: #8e8e8e;
}

.dot-pink {
	background-color: #f08a9a;
}

.dot-blue {
	left: 14px;
	width: 16px;
	background-color: #4fc3f7;
}

.tray {
	flex: 1;
	display: flex;
	align-items: center;
	justify-content: flex-end;
	padding-right: 20px;
}

.tray-mic {
	margin-left: 16px;
}

.tray-lang {
	margin-left: 20px;
	width: 24px;
	text-align: center;
	line-height: 16px;
}

.tray-net {
	margin-left: 17px;
}

.tray-vol {
	margin-left: 6px;
}

.tray-time {
	margin-left: 14px;
	font-size: 11.2px;
	text-align: right;
	line-height: 16px;
}
```
